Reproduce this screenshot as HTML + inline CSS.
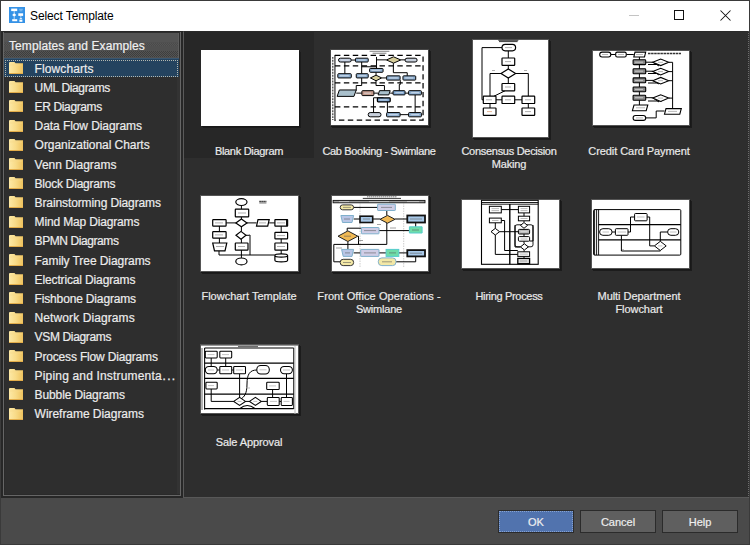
<!DOCTYPE html>
<html><head><meta charset="utf-8">
<style>
*{margin:0;padding:0;box-sizing:border-box}
html,body{width:750px;height:545px;overflow:hidden;background:#4a4a4a;font-family:"Liberation Sans",sans-serif}
.a{position:absolute}
#win{position:absolute;left:0;top:0;width:750px;height:545px;background:#4a4a4a;border:1px solid #3a3a3a}
#title{left:0;top:0;width:750px;height:31px;background:#fff;border-top:1px solid #3a3a3a;border-left:1px solid #3a3a3a;border-right:1px solid #3a3a3a}
#ttl{left:30px;top:9px;font-size:12px;color:#000;white-space:nowrap;letter-spacing:-0.1px}
#lp{left:1px;top:31px;width:182px;height:467px;background:#272727}
#lpin{left:3px;top:32px;width:178px;height:464px;background:#2e2e2e;border-left:1px solid #666;border-right:1px solid #666;border-bottom:1px solid #666}
#lpin2{left:4px;top:33px;width:176px;height:462px;border-left:1px solid #2a2a2a;border-bottom:1px solid #2a2a2a}
#lpcol{left:177px;top:58px;width:3px;height:436px;background:#333}
#hdr{left:4px;top:33px;width:175px;height:25px;background:#505050;border-right:1px solid #5e5e5e}
#hdr:before{content:"";position:absolute;left:0;top:0;width:174px;height:9px;background:#545454}
#hdr:after{content:"";position:absolute;left:0;top:18px;width:174px;height:6px;background:repeating-conic-gradient(#3e3e3e 0 25%,#545454 0 50%) 0 0/2px 2px}
#dith2{left:4px;top:43px;width:174px;height:3px;background:repeating-conic-gradient(#4a4a4a 0 25%,#565656 0 50%) 0 0/2px 2px}
#hdrt{left:9px;top:39px;font-size:12px;color:#f0f0f0;white-space:nowrap;letter-spacing:0.08px;-webkit-text-stroke:0.2px #f0f0f0}
.li{position:absolute;left:34.6px;font-size:12px;color:#ececec;white-space:nowrap;-webkit-text-stroke:0.2px #ececec}
.fd{position:absolute;left:9px;width:14px;height:12px}
#sel{left:4px;top:58px;width:175px;height:19px;background:#24435f;border-top:1px solid #3a5670}
#self{left:5px;top:60px;width:173px;height:17px;border:1px dotted #b4b8b0}
#ct{left:183px;top:31px;width:566px;height:467px;background:#2e2e2e;border-left:1px solid #5a5a5a;border-bottom:1px solid #585858;border-top:1px solid #2a2a2a;border-right:1px dotted #6c6c6c}
#cell{left:184px;top:32px;width:130px;height:126px;background:#272727}
.th{position:absolute;background:#fff;box-shadow:1px 1px 0 #181818,2px 2px 0 #1c1c1c}
.lb{position:absolute;width:130px;text-align:center;font-size:11px;color:#eaeaea;line-height:13px;-webkit-text-stroke:0.2px #eaeaea}
.bt{position:absolute;top:510px;width:76px;height:23px;border:1px solid #2b2b2b;background:#5f5f5f;color:#eee;font-size:11px;text-align:center;line-height:22px;-webkit-text-stroke:0.2px #eee}
</style></head><body>
<div id="win"></div>
<div id="title" class="a"></div>
<svg class="a" style="left:9px;top:7px" width="16" height="16" viewBox="0 0 16 16">
<rect width="16" height="16" fill="#3592e6"/>
<rect x="2.2" y="1.6" width="6" height="2.5" fill="#fff"/>
<path d="M5.2 4.1V6M5.2 9.7V12.3" stroke="#cfe6fb" stroke-width="0.8"/>
<path d="M5.2 5.9L7.2 7.9L5.2 9.8L3.2 7.9Z" fill="#fff"/>
<rect x="3.2" y="12.2" width="5" height="2" fill="#fff"/>
<path d="M10.2 2.3h3.6M10.6 3.8h2.8" stroke="#a9d3f7" stroke-width="0.7"/>
<rect x="9.3" y="6.3" width="4.8" height="2.6" fill="#fff"/>
<path d="M11.8 8.9V10.2" stroke="#cfe6fb" stroke-width="0.8"/>
<path d="M10.4 12L11.9 10.2L13.4 12Z" fill="#e6f2fd"/>
<rect x="10.4" y="12.6" width="3" height="2.2" fill="#fff"/>
</svg>
<div id="ttl" class="a">Select Template</div>
<div class="a" style="left:629px;top:15px;width:10px;height:1px;background:#c4c4c4"></div>
<div class="a" style="left:674px;top:10px;width:10px;height:10px;border:1px solid #111"></div>
<svg class="a" style="left:720px;top:10px" width="11" height="11" viewBox="0 0 11 11"><path d="M0.5 0.5L10.5 10.5M10.5 0.5L0.5 10.5" stroke="#111" stroke-width="1.05"/></svg>

<div id="lp" class="a"></div>
<div id="lpin" class="a"></div>
<div id="lpin2" class="a"></div>
<div id="lpcol" class="a"></div>
<div id="hdr" class="a"></div>
<div id="dith2" class="a"></div>
<div id="hdrt" class="a">Templates and Examples</div>
<div id="sel" class="a"></div>
<div id="self" class="a"></div>
<svg width="0" height="0" style="position:absolute"><defs><linearGradient id="fg" x1="0" y1="0" x2="1" y2="0"><stop offset="0" stop-color="#fde9a6"/><stop offset="0.5" stop-color="#f8da86"/><stop offset="1" stop-color="#eec25e"/></linearGradient></defs></svg>
<div id="list">
<svg class="fd" style="top:62.0px" width="14" height="12" viewBox="0 0 14 12"><path d="M0 1Q0 0 1 0H5.5L6.5 1.2H14V12H0Z" fill="url(#fg)"/><path d="M0 12H14V11H0Z" fill="#e3ad4a"/><path d="M1 3H13" stroke="#f6d98a" stroke-width="0.6"/></svg>
<div class="li" style="top:61.5px;letter-spacing:0.09px">Flowcharts</div>
<svg class="fd" style="top:81.2px" width="14" height="12" viewBox="0 0 14 12"><path d="M0 1Q0 0 1 0H5.5L6.5 1.2H14V12H0Z" fill="url(#fg)"/><path d="M0 12H14V11H0Z" fill="#e3ad4a"/><path d="M1 3H13" stroke="#f6d98a" stroke-width="0.6"/></svg>
<div class="li" style="top:80.7px;letter-spacing:-0.35px">UML Diagrams</div>
<svg class="fd" style="top:100.4px" width="14" height="12" viewBox="0 0 14 12"><path d="M0 1Q0 0 1 0H5.5L6.5 1.2H14V12H0Z" fill="url(#fg)"/><path d="M0 12H14V11H0Z" fill="#e3ad4a"/><path d="M1 3H13" stroke="#f6d98a" stroke-width="0.6"/></svg>
<div class="li" style="top:99.9px;letter-spacing:-0.37px">ER Diagrams</div>
<svg class="fd" style="top:119.6px" width="14" height="12" viewBox="0 0 14 12"><path d="M0 1Q0 0 1 0H5.5L6.5 1.2H14V12H0Z" fill="url(#fg)"/><path d="M0 12H14V11H0Z" fill="#e3ad4a"/><path d="M1 3H13" stroke="#f6d98a" stroke-width="0.6"/></svg>
<div class="li" style="top:119.1px;letter-spacing:-0.08px">Data Flow Diagrams</div>
<svg class="fd" style="top:138.8px" width="14" height="12" viewBox="0 0 14 12"><path d="M0 1Q0 0 1 0H5.5L6.5 1.2H14V12H0Z" fill="url(#fg)"/><path d="M0 12H14V11H0Z" fill="#e3ad4a"/><path d="M1 3H13" stroke="#f6d98a" stroke-width="0.6"/></svg>
<div class="li" style="top:138.3px;letter-spacing:-0.05px">Organizational Charts</div>
<svg class="fd" style="top:158.0px" width="14" height="12" viewBox="0 0 14 12"><path d="M0 1Q0 0 1 0H5.5L6.5 1.2H14V12H0Z" fill="url(#fg)"/><path d="M0 12H14V11H0Z" fill="#e3ad4a"/><path d="M1 3H13" stroke="#f6d98a" stroke-width="0.6"/></svg>
<div class="li" style="top:157.5px;letter-spacing:-0.02px">Venn Diagrams</div>
<svg class="fd" style="top:177.2px" width="14" height="12" viewBox="0 0 14 12"><path d="M0 1Q0 0 1 0H5.5L6.5 1.2H14V12H0Z" fill="url(#fg)"/><path d="M0 12H14V11H0Z" fill="#e3ad4a"/><path d="M1 3H13" stroke="#f6d98a" stroke-width="0.6"/></svg>
<div class="li" style="top:176.7px;letter-spacing:-0.24px">Block Diagrams</div>
<svg class="fd" style="top:196.4px" width="14" height="12" viewBox="0 0 14 12"><path d="M0 1Q0 0 1 0H5.5L6.5 1.2H14V12H0Z" fill="url(#fg)"/><path d="M0 12H14V11H0Z" fill="#e3ad4a"/><path d="M1 3H13" stroke="#f6d98a" stroke-width="0.6"/></svg>
<div class="li" style="top:195.9px;letter-spacing:-0.11px">Brainstorming Diagrams</div>
<svg class="fd" style="top:215.6px" width="14" height="12" viewBox="0 0 14 12"><path d="M0 1Q0 0 1 0H5.5L6.5 1.2H14V12H0Z" fill="url(#fg)"/><path d="M0 12H14V11H0Z" fill="#e3ad4a"/><path d="M1 3H13" stroke="#f6d98a" stroke-width="0.6"/></svg>
<div class="li" style="top:215.1px;letter-spacing:-0.16px">Mind Map Diagrams</div>
<svg class="fd" style="top:234.8px" width="14" height="12" viewBox="0 0 14 12"><path d="M0 1Q0 0 1 0H5.5L6.5 1.2H14V12H0Z" fill="url(#fg)"/><path d="M0 12H14V11H0Z" fill="#e3ad4a"/><path d="M1 3H13" stroke="#f6d98a" stroke-width="0.6"/></svg>
<div class="li" style="top:234.3px;letter-spacing:-0.42px">BPMN Diagrams</div>
<svg class="fd" style="top:254.0px" width="14" height="12" viewBox="0 0 14 12"><path d="M0 1Q0 0 1 0H5.5L6.5 1.2H14V12H0Z" fill="url(#fg)"/><path d="M0 12H14V11H0Z" fill="#e3ad4a"/><path d="M1 3H13" stroke="#f6d98a" stroke-width="0.6"/></svg>
<div class="li" style="top:253.5px;letter-spacing:-0.07px">Family Tree Diagrams</div>
<svg class="fd" style="top:273.2px" width="14" height="12" viewBox="0 0 14 12"><path d="M0 1Q0 0 1 0H5.5L6.5 1.2H14V12H0Z" fill="url(#fg)"/><path d="M0 12H14V11H0Z" fill="#e3ad4a"/><path d="M1 3H13" stroke="#f6d98a" stroke-width="0.6"/></svg>
<div class="li" style="top:272.7px;letter-spacing:-0.14px">Electrical Diagrams</div>
<svg class="fd" style="top:292.4px" width="14" height="12" viewBox="0 0 14 12"><path d="M0 1Q0 0 1 0H5.5L6.5 1.2H14V12H0Z" fill="url(#fg)"/><path d="M0 12H14V11H0Z" fill="#e3ad4a"/><path d="M1 3H13" stroke="#f6d98a" stroke-width="0.6"/></svg>
<div class="li" style="top:291.9px;letter-spacing:-0.16px">Fishbone Diagrams</div>
<svg class="fd" style="top:311.6px" width="14" height="12" viewBox="0 0 14 12"><path d="M0 1Q0 0 1 0H5.5L6.5 1.2H14V12H0Z" fill="url(#fg)"/><path d="M0 12H14V11H0Z" fill="#e3ad4a"/><path d="M1 3H13" stroke="#f6d98a" stroke-width="0.6"/></svg>
<div class="li" style="top:311.1px;letter-spacing:0.09px">Network Diagrams</div>
<svg class="fd" style="top:330.8px" width="14" height="12" viewBox="0 0 14 12"><path d="M0 1Q0 0 1 0H5.5L6.5 1.2H14V12H0Z" fill="url(#fg)"/><path d="M0 12H14V11H0Z" fill="#e3ad4a"/><path d="M1 3H13" stroke="#f6d98a" stroke-width="0.6"/></svg>
<div class="li" style="top:330.3px;letter-spacing:-0.35px">VSM Diagrams</div>
<svg class="fd" style="top:350.0px" width="14" height="12" viewBox="0 0 14 12"><path d="M0 1Q0 0 1 0H5.5L6.5 1.2H14V12H0Z" fill="url(#fg)"/><path d="M0 12H14V11H0Z" fill="#e3ad4a"/><path d="M1 3H13" stroke="#f6d98a" stroke-width="0.6"/></svg>
<div class="li" style="top:349.5px;letter-spacing:-0.17px">Process Flow Diagrams</div>
<svg class="fd" style="top:369.2px" width="14" height="12" viewBox="0 0 14 12"><path d="M0 1Q0 0 1 0H5.5L6.5 1.2H14V12H0Z" fill="url(#fg)"/><path d="M0 12H14V11H0Z" fill="#e3ad4a"/><path d="M1 3H13" stroke="#f6d98a" stroke-width="0.6"/></svg>
<div class="li" style="top:368.7px;letter-spacing:0.17px">Piping and Instrumenta<span style="letter-spacing:1.3px;margin-left:0.8px;-webkit-text-stroke:0.3px #ececec">...</span></div>
<svg class="fd" style="top:388.4px" width="14" height="12" viewBox="0 0 14 12"><path d="M0 1Q0 0 1 0H5.5L6.5 1.2H14V12H0Z" fill="url(#fg)"/><path d="M0 12H14V11H0Z" fill="#e3ad4a"/><path d="M1 3H13" stroke="#f6d98a" stroke-width="0.6"/></svg>
<div class="li" style="top:387.9px;letter-spacing:-0.12px">Bubble Diagrams</div>
<svg class="fd" style="top:407.6px" width="14" height="12" viewBox="0 0 14 12"><path d="M0 1Q0 0 1 0H5.5L6.5 1.2H14V12H0Z" fill="url(#fg)"/><path d="M0 12H14V11H0Z" fill="#e3ad4a"/><path d="M1 3H13" stroke="#f6d98a" stroke-width="0.6"/></svg>
<div class="li" style="top:407.1px;letter-spacing:-0.04px">Wireframe Diagrams</div>
</div>

<div id="ct" class="a"></div>
<div id="cell" class="a"></div>
<div id="thumbs">
<!-- 1 Blank -->
<div class="th" style="left:201px;top:50px;width:98px;height:76px"></div>
<div class="lb" style="left:184px;top:144.5px;letter-spacing:-0.3px">Blank Diagram</div>

<!-- 2 Cab Booking -->
<svg class="th" style="left:330px;top:49px" width="99" height="77" viewBox="0 0 100 78" preserveAspectRatio="none">
<rect x="0.5" y="0.5" width="99" height="77" fill="#fff" stroke="#444" stroke-width="1"/>
<path d="M40 2.3h20M43 4.3h14" stroke="#444" stroke-width="0.7"/>
<g fill="none" stroke="#000" stroke-width="1.25" stroke-dasharray="5.5 3.5">
<path d="M5 6.5H94V72H5"/><path d="M5 17H94"/><path d="M5 34.3H94"/><path d="M5 58.6H94"/>
</g>
<path d="M5 6V73" stroke="#000" stroke-width="1"/><path d="M2.8 8V72" stroke="#555" stroke-width="1.4" stroke-dasharray="2 1"/>
<g stroke="#000" stroke-width="1" fill="none">
<path d="M15 13v12M32 13v12M21.5 11.2H25.7M32 18H47V19.7M47 8V19.7M57 11H47M64 14.3V24H78V27.2M46.5 23.6V26.5M46.5 32.2V37H55V42.2M26.5 42V37H32V29.3M26.5 44.7H32.2M44.3 44.7H48.6M60.8 44.7H63.7M75.8 44.7H79.4M70 42.2V36H71V31.5M54 49.4H44V64.4M58 53.6V64.4M70.8 66.5H79.4M86 46.5V64.4M71.5 11H75.8M52.2 29.3H57.2"/>
</g>
<g stroke="#000" stroke-width="1">
<rect x="8.6" y="9.3" width="12.9" height="3.9" rx="2" fill="#b8c4d8"/>
<rect x="25.7" y="9.3" width="12.9" height="3.9" rx="0.8" fill="#8fb0d2"/>
<path d="M57 11.1L64.2 7.9L71.5 11.1L64.2 14.3Z" fill="#d6cd9a"/>
<rect x="75.8" y="9.3" width="12.2" height="3.9" rx="2" fill="#c8d0dc"/>
<rect x="40" y="19.7" width="13.6" height="3.9" rx="0.8" fill="#8fb0d2"/>
<rect x="7.9" y="25" width="13.6" height="4.3" rx="0.8" fill="#8fb0d2"/>
<rect x="26.5" y="25" width="12.1" height="4.3" rx="0.8" fill="#8fb0d2"/>
<path d="M40.8 29.3L46.5 26.5L52.2 29.3L46.5 32.2Z" fill="#d6cd9a"/>
<rect x="57.2" y="27.2" width="13.6" height="4.3" rx="0.8" fill="#8fb0d2"/>
<rect x="73.7" y="27.2" width="12.9" height="4.3" rx="0.8" fill="#8fb0d2"/>
<path d="M9.5 41.5H26.5L24.2 48H7.2Z" fill="#a9c0cc"/>
<rect x="32.2" y="42.2" width="12.1" height="5" rx="0.8" fill="#c49a8c"/>
<path d="M50 42.2H60.8L59.4 46.5H48.6Z" fill="#a9c0cc"/>
<rect x="63.7" y="42.2" width="12.1" height="4.3" rx="0.8" fill="#7fa6d0"/>
<rect x="79.4" y="42.2" width="12.9" height="4.3" rx="0.8" fill="#8fb0d2"/>
<rect x="47.9" y="49.4" width="12.9" height="4.2" rx="0.8" fill="#7fa6d0" stroke-width="1.3"/>
<rect x="38.6" y="64.4" width="12.9" height="4.3" rx="2" fill="#c8d0dc"/>
<rect x="57.2" y="64.4" width="13.6" height="4.3" rx="0.8" fill="#8fb0d2"/>
<rect x="79.4" y="64.4" width="12.9" height="4.3" rx="0.8" fill="#8fb0d2"/>
</g>
<g stroke="#e8eef5" stroke-width="0.7"><path d="M11 11.2h8M28 11.2h8M42 21.6h9M10 27.1h9M28.5 27.1h8M59.5 29.3h9M76 29.3h8M66 44.3h8M82 44.3h8M50 51.5h8M59.5 66.5h9M82 66.5h8M34.5 44.7h7"/></g></svg>
<div class="lb" style="left:314px;top:144.5px;letter-spacing:-0.33px">Cab Booking - Swimlane</div>

<!-- 3 Consensus -->
<svg class="th" style="left:472px;top:39px" width="77" height="99" viewBox="0 0 77 99" preserveAspectRatio="none">
<rect x="0.5" y="0.5" width="76" height="98" fill="#fff" stroke="#555" stroke-width="1"/>
<path d="M26.3 1.3H46.3M27 2.6H45.6" stroke="#222" stroke-width="0.9"/>
<g stroke="#000" stroke-width="1" fill="none">
<path d="M30 8.6H10V60.8H11.3M36.3 11.8V19M36.3 26.3V30M36.3 39V44.5M29 34.5H18V57.2M43.6 34.5H56.3V57.2M33 51.8L22 57.2M24 60.8H30M42.7 60.8H50M18 64.5V69M56.3 64.5V69"/>
</g>
<g stroke="#000" stroke-width="1.2" fill="#fff">
<rect x="30" y="5.4" width="13.6" height="6.4" rx="3.2"/>
<rect x="30" y="19" width="12.7" height="7.3" rx="0.6"/>
<path d="M29 34.5L36.3 30L43.6 34.5L36.3 39Z"/>
<rect x="30" y="44.5" width="12.7" height="7.3" rx="0.6"/>
<rect x="11.3" y="57.2" width="12.7" height="7.3" rx="0.6"/>
<rect x="30" y="57.2" width="12.7" height="7.3" rx="0.6"/>
<rect x="50" y="57.2" width="12.7" height="7.3" rx="0.6"/>
<rect x="11.3" y="69" width="12.7" height="7.3" rx="0.6"/>
<rect x="50" y="69" width="12.7" height="7.3" rx="0.6"/>
</g>
<g stroke="#777" stroke-width="0.6">
<path d="M33 8.6h7M33 22.6h6M33 48h6M14 60.8h6M33 60.8h6M53 60.8h6M53 72.6h6M20 31.5h3M52 31.5h3"/>
</g>
<path d="M15 72.6h5" stroke="#c86a2a" stroke-width="0.5"/>
</svg>
<div class="lb" style="left:444px;top:144.5px;letter-spacing:-0.29px">Consensus Decision<br><span style="letter-spacing:-0.2px">Making</span></div>

<!-- 4 Credit Card -->
<svg class="th" style="left:592px;top:50px" width="98" height="76" viewBox="0 0 98 76" preserveAspectRatio="none">
<rect x="0.5" y="0.5" width="97" height="75" fill="#fff" stroke="#555" stroke-width="1"/>
<path d="M56 3.5H89" stroke="#333" stroke-width="1.4" stroke-dasharray="2.5 0.6"/>
<g stroke="#000" stroke-width="1" fill="none">
<path d="M18.8 4.5H23.7M34.2 4.5H41.8M47.4 7V55M53.7 12.2H60.7L67 16M53.7 21.2H60.7L67 25M53.7 30.4H60.7L67 34M53.7 47.7H60.7L67 52M76.7 12.3H80.6V58.6M76.7 21.6H80.6M76.7 30.7H80.6M76.7 48.1H80.6M53.7 67.9H64.2V61H72.5M56 14.5H70M56 23.5H70M56 33H70M56 51H70"/>
</g>
<g stroke="#000" stroke-width="1.1">
<rect x="7.7" y="2.1" width="11.1" height="4.9" rx="2.4" fill="#fff"/>
<rect x="23.7" y="2.1" width="10.5" height="4.9" rx="1.5" fill="#fff"/>
<path d="M43 2.1H53.7L52.5 7H41.8Z" fill="#fff"/>
<rect x="41.1" y="9.8" width="12.6" height="4.8" rx="0.8" fill="#8a8a8a"/>
<rect x="41.1" y="18.8" width="12.6" height="4.9" rx="0.8" fill="#8a8a8a"/>
<rect x="41.1" y="27.9" width="12.6" height="4.9" rx="0.8" fill="#8a8a8a"/>
<rect x="41.1" y="37" width="12.6" height="4.8" rx="0.8" fill="#8a8a8a"/>
<rect x="41.1" y="45.3" width="12.6" height="4.9" rx="0.8" fill="#8a8a8a"/>
<path d="M42 55H55.8L54.2 60.7H40.4Z" fill="#fff"/>
<rect x="41.1" y="65.5" width="12.6" height="4.9" rx="2.4" fill="#fff"/>
<path d="M74 58.6H89.3L87.8 64.2H72.5Z" fill="#fff"/>
<path d="M60.7 12.3L68.7 9L76.7 12.3L68.7 15.6Z" fill="#fff"/>
<path d="M60.7 21.6L68.7 18.3L76.7 21.6L68.7 24.9Z" fill="#fff"/>
<path d="M60.7 30.7L68.7 27.4L76.7 30.7L68.7 34Z" fill="#fff"/>
<path d="M60.7 48.1L68.7 44.8L76.7 48.1L68.7 51.4Z" fill="#fff"/>
</g>
<g stroke="#eee" stroke-width="0.6"><path d="M43 12.2h8M43 21.2h8M43 30.4h8M43 39.4h8M43 47.7h8"/></g><g stroke="#888" stroke-width="0.6"><path d="M10 4.5h6M26 4.5h6M44 4.5h7M44 57.8h9M44 67.9h7M76 61.4h9M66 12.3h5M66 21.6h5M66 30.7h5M66 48.1h5"/></g>
</svg>
<div class="lb" style="left:574px;top:144.5px;letter-spacing:-0.07px">Credit Card Payment</div>

<!-- 5 Flowchart Template -->
<svg class="th" style="left:200px;top:195px" width="99" height="77" viewBox="0 0 99 77" preserveAspectRatio="none">
<rect x="0.5" y="0.5" width="98" height="76" fill="#fff" stroke="#555" stroke-width="1"/>
<path d="M59.3 6.5H66.4" stroke="#333" stroke-width="1.5" stroke-dasharray="1.6 0.4"/><path d="M59.3 8H66.4" stroke="#222" stroke-width="0.6"/>
<g stroke="#000" stroke-width="1" fill="none">
<path d="M41.4 10.6V14.1M41.4 21.9V24M26.1 27.9H35.8M47 27.9H56.5M69.2 27.9H74.9M41.4 31.8V36.4M19.4 31.1V36.7M19.4 43.1V48M81.2 31.1V37.4M81.2 43.8V48M81.2 55.1V59.3M41.4 44.2V48M41.4 55.1V62.9M19 55.8V60H74.9M49.4 40H50V60M46 40.3H49.4"/>
</g>
<g stroke="#000" stroke-width="1.2" fill="#fff">
<ellipse cx="41.4" cy="7.1" rx="5.6" ry="3.4"/>
<rect x="35.3" y="14.1" width="13.4" height="7.8" rx="0.6"/>
<path d="M35.8 27.9L41.4 24L47 27.9L41.4 31.8Z"/>
<rect x="12.7" y="24.7" width="13.4" height="6.4" rx="0.6"/>
<path d="M58 24.7H69.2L67.7 31.1H56.5Z"/>
<rect x="74.9" y="24.7" width="12.7" height="6.4" rx="0.4"/>
<path d="M36 40.3L41 36.4L46 40.3L41 44.2Z"/>
<rect x="12.7" y="36.7" width="13.4" height="6.4" rx="0.6"/>
<rect x="74.9" y="37.4" width="12.7" height="6.4" rx="0.6"/>
<path d="M12.7 48H26.8L25 55.8H14.5Z"/>
<rect x="35.3" y="48" width="12.7" height="7.1" rx="0.6"/>
<rect x="74.9" y="48" width="12.7" height="7.1" rx="0.6"/>
<path d="M74.9 60.5V65.2A6.35 1.6 0 0 0 87.6 65.2V60.5A6.35 1.6 0 0 0 74.9 60.5ZM74.9 60.5A6.35 1.6 0 0 0 87.6 60.5"/>
<ellipse cx="41.4" cy="66.4" rx="5.6" ry="3.4"/>
</g>
<path d="M86.8 25V31" stroke="#111" stroke-width="1.6"/>
<g stroke="#777" stroke-width="0.6"><path d="M15 27.9h8M38 18h8M15 39.9h8M77 40.6h8M16 51.5h8M38 51.5h7M77 51.5h8M59 27.9h7M77 27.9h8"/></g>
</svg>
<div class="lb" style="left:184px;top:289.8px">Flowchart Template</div>

<!-- 6 Front Office -->
<svg class="th" style="left:331px;top:195px" width="98" height="77" viewBox="0 0 98 77" preserveAspectRatio="none">
<rect x="0.5" y="0.5" width="97" height="76" fill="#fff" stroke="#555" stroke-width="1"/>
<path d="M31.8 3.4H70" stroke="#222" stroke-width="0.9"/><path d="M36 1.8H66" stroke="#555" stroke-width="0.8" stroke-dasharray="1.5 0.5"/>
<rect x="2.1" y="5.4" width="91.9" height="2.4" fill="#9a9a9a" stroke="#111" stroke-width="0.9"/><path d="M8 6.6h10M38 6.6h20M76 6.6h12" stroke="#eee" stroke-width="0.5"/>
<path d="M29 8V72M72.7 8V72" stroke="#aaa" stroke-width="0.6" stroke-dasharray="1.5 1"/>
<g stroke="#000" stroke-width="1" fill="none">
<path d="M22.6 12.4H46.6M55.8 15.5V20.5M22.6 24H29M41.7 24H49M64 24H76.3M84.7 27.5V31.8M48 35.6H78.4M16.2 35.9V33.2H30.4M55.8 28V49.4H2.8V66.8H9.2M27 41.2H27.5V49.4M16.9 46.5V54.4M22.6 57.9H29.7M48 57.9H55.1M67.8 57.9H76.3M65 66.8H84.7V61.4"/>
</g>
<g stroke-width="1">
<rect x="9.2" y="9.9" width="13.4" height="4.9" rx="2.4" fill="#f3e8a6" stroke="#333"/>
<rect x="46.6" y="9.2" width="17.7" height="6.3" rx="0.5" fill="#cfcde6" stroke="#7fb0cc"/>
<path d="M9.9 20.5H22.6L21 27.5H11.5Z" fill="#b9c6e6" stroke="#7fb0cc"/>
<rect x="29" y="21.2" width="12.7" height="6.3" fill="#a8c8e8" stroke="#111" stroke-width="1.6"/>
<path d="M49 24.3L56.5 20.4L64 24.3L56.5 28.2Z" fill="#f0b955" stroke="#222"/>
<rect x="76.3" y="20.5" width="17.7" height="7" fill="#a8c8e8" stroke="#111" stroke-width="1.8"/>
<rect x="30.4" y="32.5" width="17.6" height="6.3" rx="0.5" fill="#cfcde6" stroke="#7fb0cc"/>
<path d="M78.4 31.8H91.1V38H78.4Z" fill="#6fdca8" stroke="#5cc"/>
<path d="M7 41.2L16.9 35.9L26.8 41.2L16.9 46.5Z" fill="#f0b955" stroke="#222"/>
<path d="M10.6 54.4H22.6L21 61.4H12.2Z" fill="#b9c6e6" stroke="#7fb0cc"/>
<rect x="29.7" y="54.4" width="18.3" height="7" rx="0.5" fill="#cfcde6" stroke="#7fb0cc"/>
<rect x="55.1" y="54.4" width="12.7" height="7" fill="#6fdca8" stroke="#5cc"/>
<rect x="76.3" y="55.1" width="17.7" height="6.3" fill="#a8c8e8" stroke="#111" stroke-width="1.8"/>
<rect x="9.2" y="64.3" width="13.4" height="6.3" rx="3" fill="#f3e8a6" stroke="#333"/>
<rect x="47.3" y="62.9" width="17.7" height="7.7" rx="3.5" fill="#f3e8a6" stroke="#7fb0cc"/>
</g>
<g stroke="#555" stroke-width="0.55"><path d="M12 12.4h8M50 12.4h11M13 24h6M32 24h7M79 24h12M33 35.6h12M81 35h7M13 41.2h7M14 57.9h5M33 57.9h12M58 57.9h7M79 58.2h12M12 67.5h8M51 66.8h10M46 29.5h4M59 33h6M27 45.5h5M5 53h6"/></g></svg>
<div class="lb" style="left:314px;top:289.8px;letter-spacing:0.1px">Front Office Operations -<br><span style="letter-spacing:-0.2px">Swimlane</span></div>

<!-- 7 Hiring -->
<svg class="th" style="left:461px;top:199px" width="99" height="70" viewBox="0 0 99 70" preserveAspectRatio="none">
<rect x="0.5" y="0.5" width="98" height="69" fill="#fff" stroke="#555" stroke-width="1"/>
<g fill="none" stroke="#000">
<rect x="20.5" y="1.3" width="56.7" height="64" stroke-width="1.1"/>
<path d="M20.5 3.5H77.2M20.5 5.2H77.2" stroke-width="0.9"/>
<path d="M48.8 5V65.3" stroke-width="1.4"/>
<path d="M40.3 10.6H57.4M40.3 21.5H43.6V51.5H56.8M34.3 23.8V29.4M34.3 36V55.4H56.8M38.6 32.7H57.4M63 13.9V17.2M63 21.8V23M54 26V48H59M72 26V42H68.6M63 35V37.6M63 42.2V44.6M63 51.2V52.8M63 57.4V59.4" stroke-width="1"/>
<rect x="54" y="25.8" width="18" height="22" rx="2" stroke-width="0.9"/>
</g>
<g stroke="#000" stroke-width="1">
<rect x="28.4" y="7.3" width="11.9" height="6.6" fill="#fff"/>
<rect x="28.4" y="19.1" width="11.9" height="4.7" fill="#fff"/>
<path d="M30 32.7L34.3 29.4L38.6 32.7L34.3 36Z" fill="#fff"/>
<rect x="57.4" y="7.3" width="11.2" height="6.6" fill="#fff"/>
<rect x="57.4" y="17.2" width="11.2" height="4.6" fill="#fff"/>
<path d="M59.5 26.4L63 23.5L66.5 26.4L63 29.3Z" fill="#fff"/>
<rect x="57.4" y="30.4" width="11.2" height="4.6" rx="1" fill="#bbb"/>
<rect x="57.4" y="37.6" width="11.2" height="4.6" rx="1" fill="#fff"/>
<path d="M59.4 47.9L63.4 44.8L67.4 47.9L63.4 51Z" fill="#fff"/>
<rect x="56.8" y="52.8" width="11.8" height="4.6" fill="#fff"/>
<rect x="56.8" y="59.4" width="11.8" height="5.3" fill="#ddd" stroke-width="1.3"/>
</g>
<g stroke="#888" stroke-width="0.6"><path d="M30.5 9.6h7.5M30.5 11.6h7.5M31 21.5h6.5M59.5 9.6h7M59.5 11.6h7M59.5 19.5h7M59.5 40h7M58.8 55.1h8M59 62h7"/></g><path d="M59.5 32.7h7" stroke="#eee" stroke-width="0.6"/></svg>
<div class="lb" style="left:444px;top:289.8px;letter-spacing:-0.32px">Hiring Process</div>

<!-- 8 Multi Department -->
<svg class="th" style="left:591px;top:199px" width="99" height="70" viewBox="0 0 99 70" preserveAspectRatio="none">
<rect x="0.5" y="0.5" width="98" height="69" fill="#fff" stroke="#555" stroke-width="1"/>
<g fill="none" stroke="#000">
<rect x="2.6" y="10.6" width="87.2" height="45.5" rx="1" stroke-width="1"/>
<path d="M3.6 10.6V56M5.6 10.6V56M7.6 10.6V56" stroke-width="0.9"/>
<path d="M7.6 25.7H89.8M7.6 40.9H89.8" stroke-width="1.2"/>
<path d="M21.1 33H24.4M37 33H39.5V18H43.6M56.1 18H58.7V46.9H63.4M30.4 36.3V52H69.3V51.5M69.3 42.3V33H76.6" stroke-width="1"/>
</g>
<g stroke="#000" stroke-width="1" fill="#fff">
<rect x="8.6" y="29.7" width="12.5" height="6.6" rx="3.3"/>
<rect x="24.4" y="29.7" width="12.6" height="6.6" rx="0.8"/>
<rect x="43.6" y="14.5" width="12.5" height="7.3" rx="0.8"/>
<rect x="76.6" y="29.7" width="11.2" height="6.6" rx="3.3"/>
<path d="M63.4 46.9L69.3 42.3L75.2 46.9L69.3 51.5Z"/>
</g>
<g stroke="#999" stroke-width="0.6"><path d="M11.5 33h6.5M26.5 33h8.5M46 18h7.5M79 33h6.5M67 46.9h4.5M31 50.5h2"/></g></svg>
<div class="lb" style="left:574px;top:289.8px;letter-spacing:-0.05px">Multi Department<br><span style="letter-spacing:-0.07px">Flowchart</span></div>

<!-- 9 Sale Approval -->
<svg class="th" style="left:200px;top:344px" width="99" height="70" viewBox="0 0 99 70" preserveAspectRatio="none">
<rect x="0.5" y="0.5" width="98" height="69" fill="#fff" stroke="#555" stroke-width="1"/>
<rect x="0" y="0" width="99" height="1.6" fill="#555"/><path d="M38 2.6h20" stroke="#333" stroke-width="0.8"/>
<path d="M4.6 4V66M2 4V66" stroke="#666" stroke-width="1"/>
<path d="M95 2V70" stroke="#bbb" stroke-width="1"/>
<g stroke="#000" fill="none">
<path d="M4.6 4H93.7M4.6 19.1H93.7M4.6 34.3H93.7M4.6 50.2H93.7M4.6 64.7H93.7" stroke-width="1.2"/>
<path d="M93.7 4V65M4.6 4V65" stroke-width="0.9"/>
<path d="M11.2 13.9V22.4M25.7 13.9V22.4M17.2 26H19.8M31.7 26H33.7M39.6 29.7V53.4M56.8 26C50 26 47 30 47 40C47 50 44 53 41 55M11.2 44.9V57.4H33.7M72.6 45.5V53.5M86.5 29.7V53.5M45.5 57.4H49.5M61.3 57.4H67.3M79.2 57.4H81.2" stroke-width="1"/>
</g>
<g stroke="#000" stroke-width="1.05" fill="#fff">
<rect x="5.3" y="7.3" width="11.9" height="6.6" rx="0.8"/>
<rect x="19.8" y="7.3" width="11.9" height="6.6" rx="0.8"/>
<rect x="5.3" y="22.4" width="11.9" height="7.3" rx="3.6"/>
<rect x="19.8" y="22.4" width="11.9" height="7.3" rx="0.8"/>
<rect x="33.7" y="22.4" width="11.8" height="7.3" rx="0.8"/>
<rect x="56.8" y="21.5" width="12.5" height="8.5" rx="4"/>
<rect x="80.5" y="22.4" width="11.9" height="7.3" rx="3.6"/>
<rect x="5.9" y="38.3" width="11.3" height="6.6" rx="0.8"/>
<rect x="66.7" y="38.3" width="12.5" height="7.2" rx="0.8"/>
<path d="M33.7 57.4L39.6 53.4L45.5 57.4L39.6 61.4Z"/>
<path d="M49.5 57.4L55.4 53.4L61.3 57.4L55.4 61.4Z"/>
<rect x="67.3" y="53.5" width="11.9" height="7.9" rx="0.8"/>
<rect x="81.2" y="53.5" width="11.2" height="7.9" rx="0.8"/>
<path d="M40 64.5Q47 58.5 55 64.5Z"/>
</g>
<g stroke="#999" stroke-width="0.6"><path d="M7.5 10.6h7M22 10.6h7M8 26h6M22 26h7M36 26h7M59.5 25.8h7M83 26h7M8 41.6h6M69 41.9h7M70 57.4h7M83.5 57.4h6M37.5 57.4h4M53.3 57.4h4M46 44h4"/></g></svg>
<div class="lb" style="left:184px;top:435.5px;letter-spacing:-0.1px">Sale Approval</div>
</div>


<div class="bt" style="left:498px;background:#5173ae;outline:1px dotted #86a2d0;outline-offset:-2px">OK</div>
<div class="bt" style="left:580px">Cancel</div>
<div class="bt" style="left:662px">Help</div>
</body></html>
